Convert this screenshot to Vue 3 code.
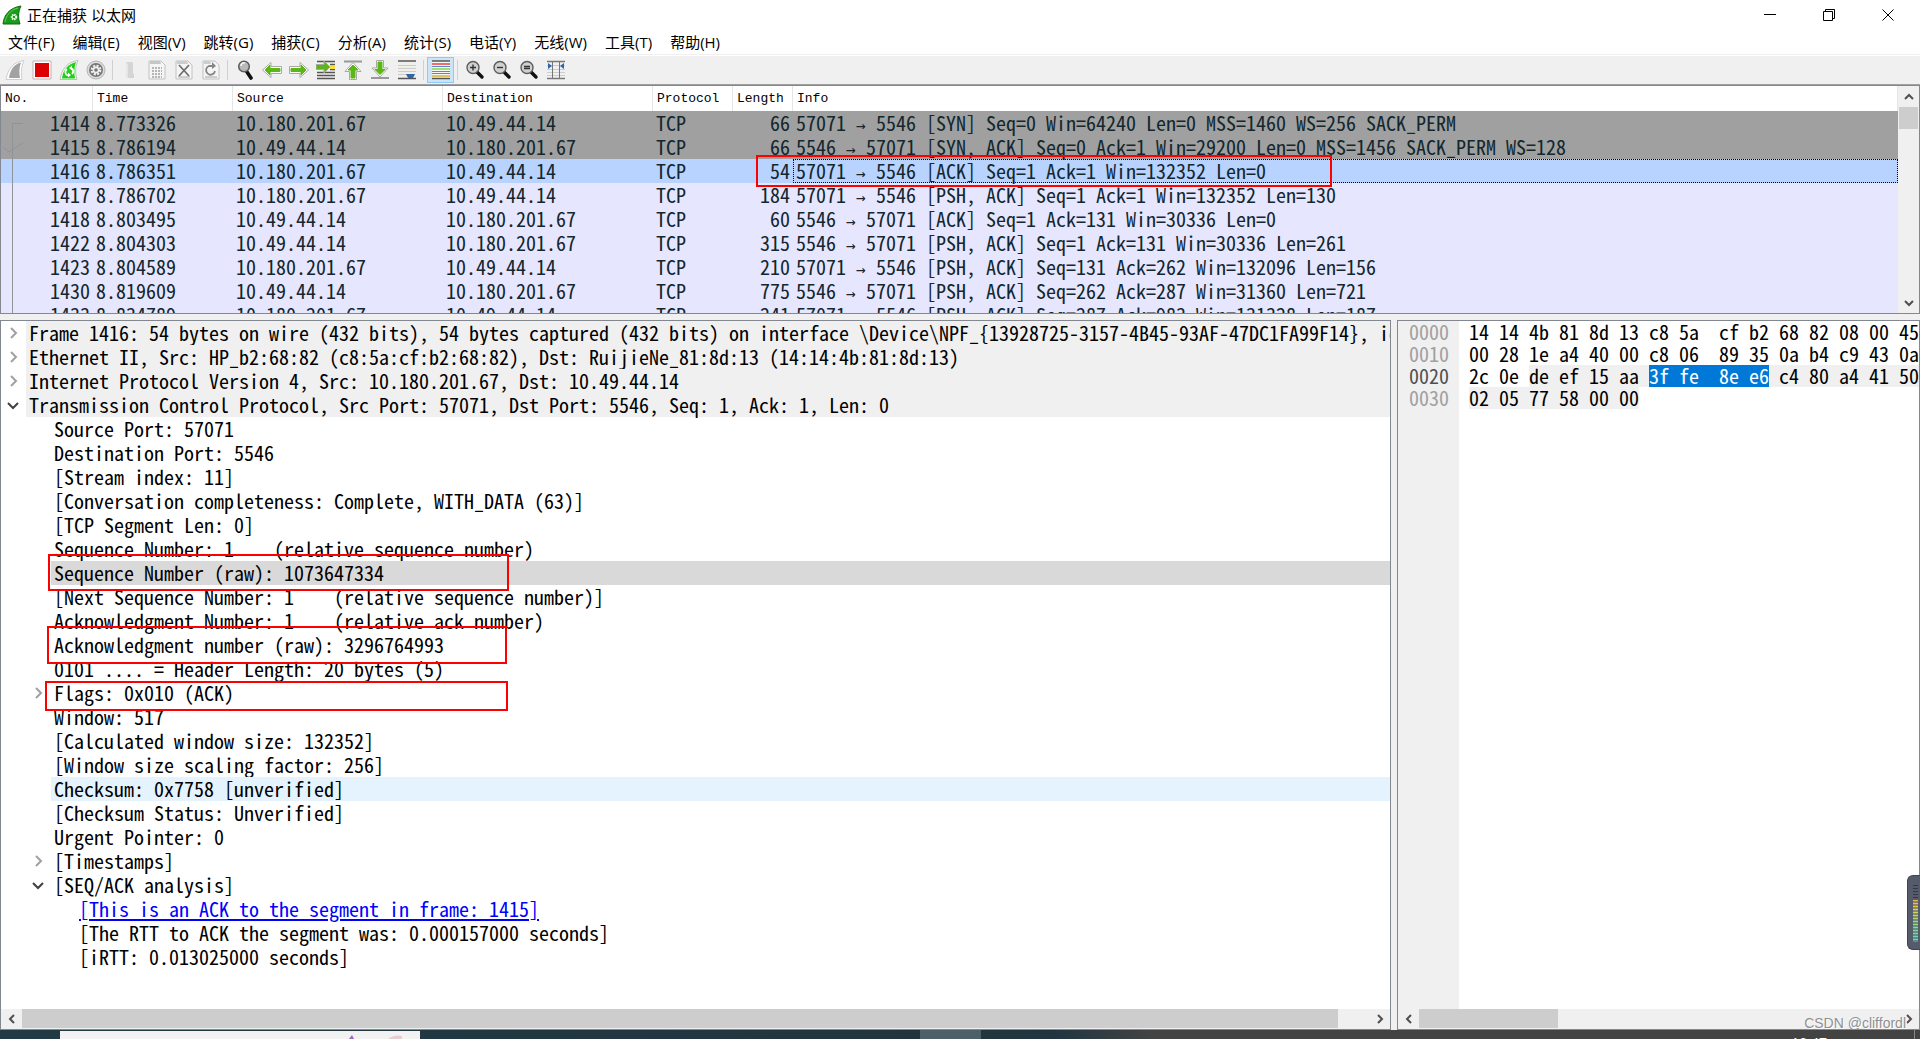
<script setup>
const menus = ['文件(F)', '编辑(E)', '视图(V)', '跳转(G)', '捕获(C)', '分析(A)', '统计(S)', '电话(Y)', '无线(W)', '工具(T)', '帮助(H)']

const A = '10.180.201.67'
const B = '10.49.44.14'
const packets = [
  { no: 1414, time: '8.773326', src: A, dst: B, len: 66, from: '57071', to: '5546 [SYN] Seq=0 Win=64240 Len=0 MSS=1460 WS=256 SACK_PERM', kind: 'syn' },
  { no: 1415, time: '8.786194', src: B, dst: A, len: 66, from: '5546', to: '57071 [SYN, ACK] Seq=0 Ack=1 Win=29200 Len=0 MSS=1456 SACK_PERM WS=128', kind: 'syn' },
  { no: 1416, time: '8.786351', src: A, dst: B, len: 54, from: '57071', to: '5546 [ACK] Seq=1 Ack=1 Win=132352 Len=0', kind: 'selected' },
  { no: 1417, time: '8.786702', src: A, dst: B, len: 184, from: '57071', to: '5546 [PSH, ACK] Seq=1 Ack=1 Win=132352 Len=130', kind: 'tcp' },
  { no: 1418, time: '8.803495', src: B, dst: A, len: 60, from: '5546', to: '57071 [ACK] Seq=1 Ack=131 Win=30336 Len=0', kind: 'tcp' },
  { no: 1422, time: '8.804303', src: B, dst: A, len: 315, from: '5546', to: '57071 [PSH, ACK] Seq=1 Ack=131 Win=30336 Len=261', kind: 'tcp' },
  { no: 1423, time: '8.804589', src: A, dst: B, len: 210, from: '57071', to: '5546 [PSH, ACK] Seq=131 Ack=262 Win=132096 Len=156', kind: 'tcp' },
  { no: 1430, time: '8.819609', src: B, dst: A, len: 775, from: '5546', to: '57071 [PSH, ACK] Seq=262 Ack=287 Win=31360 Len=721', kind: 'tcp' },
  { no: 1433, time: '8.834789', src: A, dst: B, len: 241, from: '57071', to: '5546 [PSH, ACK] Seq=287 Ack=983 Win=131328 Len=187', kind: 'tcp' }
]

const details = [
  { d: 0, t: 'Frame 1416: 54 bytes on wire (432 bits), 54 bytes captured (432 bits) on interface \\Device\\NPF_{13928725-3157-4B45-93AF-47DC1FA99F14}, id 0', arrow: 'closed', tone: 'proto' },
  { d: 0, t: 'Ethernet II, Src: HP_b2:68:82 (c8:5a:cf:b2:68:82), Dst: RuijieNe_81:8d:13 (14:14:4b:81:8d:13)', arrow: 'closed', tone: 'proto' },
  { d: 0, t: 'Internet Protocol Version 4, Src: 10.180.201.67, Dst: 10.49.44.14', arrow: 'closed', tone: 'proto' },
  { d: 0, t: 'Transmission Control Protocol, Src Port: 57071, Dst Port: 5546, Seq: 1, Ack: 1, Len: 0', arrow: 'open', tone: 'proto' },
  { d: 1, t: 'Source Port: 57071' },
  { d: 1, t: 'Destination Port: 5546' },
  { d: 1, t: '[Stream index: 11]' },
  { d: 1, t: '[Conversation completeness: Complete, WITH_DATA (63)]' },
  { d: 1, t: '[TCP Segment Len: 0]' },
  { d: 1, t: 'Sequence Number: 1    (relative sequence number)' },
  { d: 1, t: 'Sequence Number (raw): 1073647334', tone: 'picked', mark: 'mark-seq' },
  { d: 1, t: '[Next Sequence Number: 1    (relative sequence number)]' },
  { d: 1, t: 'Acknowledgment Number: 1    (relative ack number)' },
  { d: 1, t: 'Acknowledgment number (raw): 3296764993', mark: 'mark-ack' },
  { d: 1, t: '0101 .... = Header Length: 20 bytes (5)' },
  { d: 1, t: 'Flags: 0x010 (ACK)', arrow: 'closed', mark: 'mark-flags' },
  { d: 1, t: 'Window: 517' },
  { d: 1, t: '[Calculated window size: 132352]' },
  { d: 1, t: '[Window size scaling factor: 256]' },
  { d: 1, t: 'Checksum: 0x7758 [unverified]', tone: 'hover' },
  { d: 1, t: '[Checksum Status: Unverified]' },
  { d: 1, t: 'Urgent Pointer: 0' },
  { d: 1, t: '[Timestamps]', arrow: 'closed' },
  { d: 1, t: '[SEQ/ACK analysis]', arrow: 'open' },
  { d: 2, t: '[This is an ACK to the segment in frame: 1415]', link: true },
  { d: 2, t: '[The RTT to ACK the segment was: 0.000157000 seconds]' },
  { d: 2, t: '[iRTT: 0.013025000 seconds]' }
]

const hexRows = [
  { off: '0000', parts: [{ t: '14 14 4b 81 8d 13 c8 5a  cf b2 68 82 08 00 45' }] },
  { off: '0010', parts: [{ t: '00 28 1e a4 40 00 c8 06  89 35 0a b4 c9 43 0a' }] },
  { off: '0020', active: true, parts: [{ t: '2c 0e ' }, { t: 'de ef 15 aa ', c: 'layer' }, { t: '3f fe  8e e6', c: 'field' }, { t: ' c4 80 a4 41 50', c: 'layer' }] },
  { off: '0030', parts: [{ t: '02 05 77 58 00 00', c: 'layer' }] }
]
</script>

<template>
  <div class="window">
    <header class="titlebar">
      <svg class="logo" viewBox="0 0 20 20" aria-hidden="true">
        <path d="M1 19C2 10 7 3 19 1C16 7 16 13 18 19Z" fill="#1a9c1a" stroke="#0d6b10" />
        <path d="M3 17C4 11 8 5 16 3" fill="none" stroke="#5fd24f" />
        <circle cx="12" cy="12" r="2.6" fill="none" stroke="#e6f7e2" stroke-width="1.4" stroke-dasharray="1.6 0.8" />
        <circle cx="12" cy="12" r="1.8" fill="none" stroke="#e6f7e2" />
      </svg>
      <h1>正在捕获 以太网</h1>
      <div class="controls">
        <button aria-label="最小化"><svg viewBox="0 0 12 12"><path d="M0 5.500H12" /></svg></button>
        <button aria-label="还原"><svg viewBox="0 0 12 12"><path d="M.5 2.500H9.500V11.500H.5ZM2.500 2V.5H11.500V9.500H10" /></svg></button>
        <button aria-label="关闭"><svg viewBox="0 0 12 12"><path d="M.5 .5L11.500 11.500M11.500 .5L.5 11.500" /></svg></button>
      </div>
    </header>

    <nav class="menubar">
      <button v-for="m in menus" :key="m">{{ m }}</button>
    </nav>

    <div class="toolbar" role="toolbar">
      <button aria-label="开始捕获"><svg viewBox="0 0 20 20"><path d="M1 19.500C3 9 8 2 19 .5C16 7 16 13 17 19.500Z" fill="#fff" stroke="#cfcfcf" /><path d="M4 18C5 10 9 4 16 2.500C14 8 14 13 15 18Z" fill="#a2a2a2" /></svg></button>
      <button aria-label="停止捕获"><svg viewBox="0 0 20 20"><path d="M1 1H19V19H1Z" fill="#fff" stroke="#c9b0b0" /><path d="M3 3H17V17H3Z" fill="#dc0000" /></svg></button>
      <button aria-label="重新开始"><svg viewBox="0 0 20 20"><path d="M1 19.500C3 9 8 2 19 .5C16 7 16 13 18 19.500Z" fill="#fff" stroke="#b9c4b6" /><path d="M3 18.500C4 10 9 4 17 2C15 8 15 13 16 18.500Z" fill="#1fd016" /><path d="M8 9A3.600 3.600 0 0 0 9 15.500M13 14A3.600 3.600 0 0 0 12 8" fill="none" stroke="#fff" stroke-width="1.800" /><path d="M9 17.500V12.500L12 15ZM13 5.500V10.500L10 8Z" fill="#fff" /></svg></button>
      <button aria-label="捕获选项"><svg viewBox="0 0 20 20"><circle cx="10" cy="10" r="9" fill="#ddd" stroke="#b4b4b4" /><circle cx="10" cy="10" r="7" fill="#777" /><circle cx="10" cy="10" r="4.200" fill="none" stroke="#eee" stroke-width="2.400" stroke-dasharray="2 1.300" /><circle cx="10" cy="10" r="3.400" fill="#eee" /><circle cx="10" cy="10" r="1.800" fill="#777" /></svg></button>
      <i class="sep"></i>
      <button aria-label="打开"><svg viewBox="0 0 20 20"><path d="M6 2H12L13 3V13L14 14V18H6Z" fill="#d5d5d5" /><path d="M6 2L8 4V18H6Z" fill="#e6e6e6" /></svg></button>
      <button aria-label="保存"><svg viewBox="0 0 20 20"><path d="M2 1H14L18 5V19H2Z" fill="#f5f5f5" stroke="#c2c2c2" /><path d="M3 4H14L13 1H3Z" fill="#c6c6c6" /><path d="M5 8H15M5 11H15M5 14H15M5 17H15" stroke="#b5b5b5" stroke-width="2" stroke-dasharray="2 1" /></svg></button>
      <button aria-label="关闭文件"><svg viewBox="0 0 20 20"><path d="M2 1H14L18 5V19H2Z" fill="#f5f5f5" stroke="#c2c2c2" /><path d="M3 4H14L13 1H3ZM4 16H16V18H4Z" fill="#cdcdcd" /><path d="M5 5L15 16M15 5L5 16" stroke="#6f6f6f" stroke-width="1.800" /></svg></button>
      <button aria-label="重新加载"><svg viewBox="0 0 20 20"><path d="M2 1H14L18 5V19H2Z" fill="#f5f5f5" stroke="#c2c2c2" /><path d="M3 4H10L9 1H3ZM4 16H16V18H4Z" fill="#cdcdcd" /><path d="M12 6H8A4.500 4.500 0 1 0 14 11" fill="none" stroke="#858585" stroke-width="1.800" /><path d="M11 2L15 6L11 9Z" fill="#858585" /></svg></button>
      <i class="sep"></i>
      <button aria-label="查找"><svg viewBox="0 0 20 20"><path d="M12 12L16 18" stroke="#111" stroke-width="3.600" stroke-linecap="round" /><circle cx="9" cy="6.500" r="5.300" fill="#b9b9b9" stroke="#5c5c5c" stroke-width="1.500" /><path d="M6 6A3 3 0 0 1 10 3" fill="none" stroke="#f7f7f7" stroke-width="1.600" /></svg></button>
      <button aria-label="后退"><svg viewBox="0 0 20 20"><path d="M.5 10L9 2.500V6.500H19.500V13.500H9V17.500Z" fill="#fff" stroke="#a8aaa5" /><path d="M3 10L8 5V8.500H18V11.500H8V15Z" fill="#5cb615" stroke="#5cb615" /></svg></button>
      <button aria-label="前进"><svg viewBox="0 0 20 20"><path d="M19.500 10L11 2.500V6.500H.5V13.500H11V17.500Z" fill="#fff" stroke="#a8aaa5" /><path d="M17 10L12 5V8.500H2V11.500H12V15Z" fill="#5cb615" stroke="#5cb615" /></svg></button>
      <button aria-label="转到分组"><svg viewBox="0 0 20 20"><path d="M1 1.500H19M1 12.500H19M1 15.500H19M1 18.500H19M14 4.500H19M14 9.500H19" stroke="#555" stroke-width="1.300" /><path d="M14 6H19V9H14Z" fill="#f7e03b" /><path d="M14 7L8 1V4.500H0V9.500H8V13Z" fill="#5cb615" stroke="#a8aaa5" /></svg></button>
      <button aria-label="首个分组"><svg viewBox="0 0 20 20"><path d="M1 1.500H19" stroke="#999" stroke-width="2" /><path d="M10 2.500L18 11.500H13.500V19.500H6.500V11.500H2Z" fill="#fff" stroke="#a8aaa5" /><path d="M10 5L15 10H12V18H8V10H5Z" fill="#5cb615" stroke="#5cb615" /></svg></button>
      <button aria-label="最后分组"><svg viewBox="0 0 20 20"><path d="M1 18H19" stroke="#999" stroke-width="2" /><path d="M10 17L18 8H13.500V.5H6.500V8H2Z" fill="#fff" stroke="#a8aaa5" /><path d="M10 14.500L15 9.500H12V2H8V9.500H5Z" fill="#5cb615" stroke="#5cb615" /></svg></button>
      <button aria-label="自动滚动"><svg viewBox="0 0 20 20"><path d="M1 1H19V19H1Z" fill="#eeefe9" /><path d="M1 1H19M1 18.500H19" stroke="#555" stroke-width="1.400" /><path d="M1 5.500H19M1 8.500H19M1 11.500H19M1 14.500H10" stroke="#ccc" /><path d="M9 14H18L16 18H11Z" fill="#2e66ad" /></svg></button>
      <i class="sep"></i>
      <button class="on" aria-label="着色" aria-pressed="true"><svg viewBox="0 0 20 20"><path d="M1 1H19V19H1Z" fill="#f7f8f5" /><path d="M1 1H19M1 18.500H19" stroke="#555" stroke-width="1.400" /><path d="M1 4H19" stroke="#f04848" stroke-width="1.600" /><path d="M1 6.500H19" stroke="#5b86cc" /><path d="M1 9H19" stroke="#79d443" stroke-width="1.400" /><path d="M1 11.500H19" stroke="#5f86c4" /><path d="M1 13.500H19" stroke="#9a6aa5" /><path d="M1 16H19" stroke="#d2a928" stroke-width="1.400" /></svg></button>
      <i class="sep"></i>
      <button aria-label="放大"><svg viewBox="0 0 20 20"><path d="M12 12L17 17" stroke="#111" stroke-width="3.400" stroke-linecap="round" /><circle cx="8" cy="7.500" r="6" fill="#d0d0d0" stroke="#5c5c5c" stroke-width="1.400" /><path d="M5 7.500H11M8 4.500V10.500" stroke="#333" stroke-width="1.400" /></svg></button>
      <button aria-label="缩小"><svg viewBox="0 0 20 20"><path d="M12 12L17 17" stroke="#111" stroke-width="3.400" stroke-linecap="round" /><circle cx="8" cy="7.500" r="6" fill="#d0d0d0" stroke="#5c5c5c" stroke-width="1.400" /><path d="M5 7.500H11" stroke="#333" stroke-width="1.400" /></svg></button>
      <button aria-label="普通大小"><svg viewBox="0 0 20 20"><path d="M12 12L17 17" stroke="#111" stroke-width="3.400" stroke-linecap="round" /><circle cx="8" cy="7.500" r="6" fill="#d0d0d0" stroke="#5c5c5c" stroke-width="1.400" /><path d="M5 6.500H11M5 8.500H11" stroke="#333" stroke-width="1.400" /></svg></button>
      <button aria-label="调整列宽"><svg viewBox="0 0 20 20"><path d="M1 1.500H19M1 18.500H19" stroke="#777" stroke-width="1.300" /><path d="M1 5.500H19M1 9.500H19M1 12.500H19M1 15.500H19" stroke="#ccc" /><path d="M6.500 1V19M13.500 1V19" stroke="#777" /><path d="M2 3L6 6L2 9ZM18 3L14 6L18 9Z" fill="#2e66ad" /></svg></button>
    </div>

    <main class="panes">
      <section class="pane packets">
        <div class="scroller">
          <table>
            <colgroup><col class="c-no" /><col class="c-time" /><col class="c-addr" /><col class="c-addr" /><col class="c-proto" /><col class="c-len" /><col /></colgroup>
            <thead>
              <tr><th>No.</th><th>Time</th><th>Source</th><th>Destination</th><th>Protocol</th><th>Length</th><th>Info</th></tr>
            </thead>
            <tbody>
              <tr v-for="p in packets" :key="p.no" :class="p.kind">
                <td class="num">{{ p.no }}</td><td>{{ p.time }}</td><td>{{ p.src }}</td><td>{{ p.dst }}</td><td>TCP</td><td class="num">{{ p.len }}</td>
                <td class="info">{{ p.from }} <span class="arrow">→</span> {{ p.to }}</td>
              </tr>
            </tbody>
          </table>
          <svg class="related" viewBox="0 0 24 230" aria-hidden="true"><path d="M22 37.500H11.500V230" /><path d="M2 61L8 66L22 57" /></svg>
          <span class="mark mark-packet"></span>
        </div>
        <div class="vbar">
          <button aria-label="向上"><svg viewBox="0 0 10 10"><path d="M1 7L5 3L9 7" /></svg></button>
          <span class="thumb"></span>
          <button class="end" aria-label="向下"><svg viewBox="0 0 10 10"><path d="M1 3L5 7L9 3" /></svg></button>
        </div>
      </section>

      <div class="lower">
        <section class="pane details">
          <ul>
            <li v-for="(r, i) in details" :key="i" :class="['depth' + r.d, r.tone]">
              <span class="gutter">
                <button v-if="r.arrow" :class="r.arrow" :aria-label="r.arrow === 'open' ? '折叠' : '展开'">
                  <svg viewBox="0 0 12 12"><path :d="r.arrow === 'open' ? 'M1 4L6 9L11 4' : 'M4 1L9 6L4 11'" /></svg>
                </button>
              </span>
              <a v-if="r.link" class="label" href="#1415">{{ r.t }}</a>
              <span v-else class="label">{{ r.t }}</span>
              <span v-if="r.mark" :class="['mark', r.mark]"></span>
            </li>
          </ul>
          <div class="hbar">
            <button aria-label="向左"><svg viewBox="0 0 10 10"><path d="M7 1L3 5L7 9" /></svg></button>
            <span class="track"><span class="thumb wide"></span></span>
            <button aria-label="向右"><svg viewBox="0 0 10 10"><path d="M3 1L7 5L3 9" /></svg></button>
          </div>
        </section>

        <section class="pane bytes">
          <div class="dump">
            <div class="offsets"><div v-for="h in hexRows" :key="h.off" :class="{ active: h.active }">{{ h.off }}</div></div>
            <div class="hex"><div v-for="h in hexRows" :key="h.off"><span v-for="(p, i) in h.parts" :key="i" :class="p.c">{{ p.t }}</span></div></div>
          </div>
          <div class="hbar">
            <button aria-label="向左"><svg viewBox="0 0 10 10"><path d="M7 1L3 5L7 9" /></svg></button>
            <span class="track"><span class="thumb short"></span></span>
            <button aria-label="向右"><svg viewBox="0 0 10 10"><path d="M3 1L7 5L3 9" /></svg></button>
          </div>
          <span class="watermark">CSDN @cliffordl</span>
        </section>
      </div>
    </main>

    <footer class="taskbar">
      <span class="search"><svg viewBox="0 0 60 8" aria-hidden="true"><path d="M3 8L6 4L8 8Z" fill="#9a6bc4" /><path d="M42 8Q48 3 56 5V8Z" fill="#e6cfd2" /></svg></span>
      <span class="task"></span>
      <span class="clock">10:47</span>
      <span class="desktop"></span>
    </footer>

    <span class="meter"><i class="idle"></i><i class="level"></i></span>
  </div>
</template>

<style>
html, body { margin: 0; background: #f0f0f0; }
</style>

<style scoped>
.window {
  --mono: "Noto Sans Mono CJK SC", "Liberation Mono", monospace;
  --line: #828790;
  position: relative;
  display: flex;
  flex-direction: column;
  height: 100vh;
  overflow: hidden;
  background: #f0f0f0;
  color: #000;
  font: 15px/24px "Open Sans", "Noto Sans CJK SC", sans-serif;
}
button { margin: 0; padding: 0; border: 0; background: none; font: inherit; color: inherit; }
svg { display: block; }

.titlebar { display: flex; flex: none; align-items: center; height: 30px; padding: 0 3px 0 2px; background: #fff; }
.logo { width: 20px; height: 20px; }
h1 { margin: 0 0 0 5px; font: inherit; }
.controls { display: flex; margin-left: auto; }
.controls button { display: grid; place-items: center; width: 59px; height: 28px; }
.controls svg { width: 12px; height: 12px; fill: none; stroke: #000; }

.menubar { display: flex; flex: none; height: 24px; background: #fff; border-bottom: 1px solid #f0f0f0; }
.menubar button { padding: 0 10px 0 8px; }

.toolbar { display: flex; flex: none; align-items: center; height: 28px; padding-left: 1px; border-top: 1px solid #fff; border-bottom: 1px solid #a0a0a0; }
.toolbar button { display: grid; place-items: center; width: 27px; height: 26px; box-sizing: border-box; }
.toolbar svg { width: 20px; height: 20px; }
.toolbar .on { background: #cce4f7; border: 1px solid #90c8f6; }
.sep { width: 1px; height: 20px; margin: 0 3px; background: #d0d0d0; }

.panes { display: flex; flex: 1; flex-direction: column; gap: 6px; min-height: 0; }
.pane { display: flex; position: relative; min-width: 0; min-height: 0; border: 1px solid var(--line); background: #fff; box-sizing: border-box; overflow: hidden; }
.packets { flex: 227 0 0; }
.scroller { position: relative; flex: 1; min-width: 0; overflow: hidden; }
table { width: 100%; table-layout: fixed; border-spacing: 0; border-collapse: separate; }
.c-no { width: 92px; }
.c-time { width: 140px; }
.c-addr { width: 210px; }
.c-proto { width: 80px; }
.c-len { width: 60px; }
th { padding: 1px 0 0 4px; border-right: 1px solid #e5e5e5; font: 13px/24px "Liberation Mono", monospace; text-align: left; }
td { height: 24px; padding: 0 0 0 3px; font: 20px/24px var(--mono); white-space: pre; }
tbody { color: #12272e; }
td.num { padding: 0 3px 0 0; text-align: right; }
.syn { background: #a0a0a0; }
.selected { background: #b8d3ff; }
.tcp { background: #e7e6ff; }
.selected .info { outline: 1px dotted #000; outline-offset: -1px; }
.arrow { display: inline-block; width: 10px; font: 16px/16px "DejaVu Sans Mono", monospace; }
.related { position: absolute; top: 0; left: 0; width: 24px; height: 230px; fill: none; stroke: #8e9599; }

.mark { position: absolute; z-index: 1; border: 2px solid #f00; box-sizing: border-box; pointer-events: none; }
.mark-packet { top: 69px; left: 755px; width: 576px; height: 32px; }
.mark-seq { top: -7px; left: 47px; width: 461px; height: 37px; }
.mark-ack { top: -7px; left: 46px; width: 460px; height: 38px; }
.mark-flags { top: 0; left: 44px; width: 463px; height: 30px; }

.vbar { display: flex; flex-direction: column; width: 21px; padding: 0 1px; background: #f0f0f0; box-sizing: border-box; }
.vbar button { display: grid; place-items: center; height: 21px; }
.vbar .thumb { height: 22px; }
.vbar .end { margin-top: auto; }
.vbar svg, .hbar svg { width: 10px; height: 10px; fill: none; stroke: #505050; stroke-width: 2; }
.thumb { display: block; background: #cdcdcd; }
.hbar { display: flex; flex: none; height: 20px; background: #f0f0f0; }
.hbar button { display: grid; place-items: center; width: 21px; }
.track { flex: 1; }
.hbar .thumb { height: 19px; }
.wide { margin-right: 31px; }
.short { width: 29%; }

.lower { display: flex; flex: 710 0 0; gap: 6px; min-height: 0; }
.details { flex: 1389 0 0; flex-direction: column; }
.bytes { flex: 521 0 0; flex-direction: column; }
ul { flex: 1; min-height: 0; margin: 0; padding: 0; list-style: none; overflow: hidden; }
li { position: relative; display: flex; height: 24px; font: 20px/24px var(--mono); white-space: pre; }
.gutter { display: flex; flex: none; align-items: center; justify-content: flex-end; width: 25px; box-sizing: border-box; padding-right: 7px; }
.depth1 .gutter { width: 50px; }
.depth2 .gutter { width: 75px; }
.gutter svg { width: 12px; height: 12px; fill: none; stroke: #a0a0a0; stroke-width: 2; }
.gutter .open svg { stroke: #404040; }
.label { flex: 1; min-width: 0; padding-left: 3px; }
.proto .label { background: #f0f0f0; }
.picked .label { background: #d9d9d9; }
.hover .label { background: #e5f3ff; }
a.label { color: #00f; text-underline-offset: 2px; }

.dump { display: flex; flex: 1; min-height: 0; font: 20px/22px var(--mono); white-space: pre; }
.offsets { flex: none; padding: 0 10px 0 11px; background: #f0f0f0; color: #a0a0a0; }
.offsets .active { color: #505050; }
.hex { flex: 1; min-width: 0; padding-left: 10px; }
.hex div { display: flex; height: 22px; }
.layer { background: #f0f0f0; }
.field { background: #0078d7; color: #fff; }
.watermark { position: absolute; right: 13px; bottom: -2px; color: #909090; font: 14px/16px "Liberation Sans", sans-serif; text-shadow: 1px 1px 0 #fff; }

.taskbar { display: flex; flex: none; height: 9px; padding-left: 60px; background: linear-gradient(90deg, #213a43 0%, #22353f 48%, #213540 55%, #434343 60%, #434343 100%); overflow: hidden; }
.search { width: 360px; margin-top: 1px; background: #f2f2f2; }
.search svg { width: 60px; height: 8px; margin-left: 286px; }
.task { width: 61px; margin-left: 500px; background: #4d5f67; }
.clock { margin: 2px 87px 0 auto; color: #fff; font: 14px/22px "Open Sans", sans-serif; }
.desktop { width: 5px; border-left: 1px solid #8a8a8a; }

.meter { position: absolute; right: 0; bottom: 89px; z-index: 2; width: 13px; height: 75px; padding: 9px 2px 8px 5px; box-sizing: border-box; border: 1px solid #3f4450; border-right: 0; border-radius: 6px 0 0 6px; background: #555b6b; }
.meter i { display: block; }
.idle { height: 15px; background: repeating-linear-gradient(#333847 0 1px, #555b6b 1px 3px); }
.level { height: 42px; background: repeating-linear-gradient(transparent 0 1px, #555b6b99 1px 3px), linear-gradient(#f0b050, #d8d850 25%, #90dc80 55%, #50e0c8); }
</style>
